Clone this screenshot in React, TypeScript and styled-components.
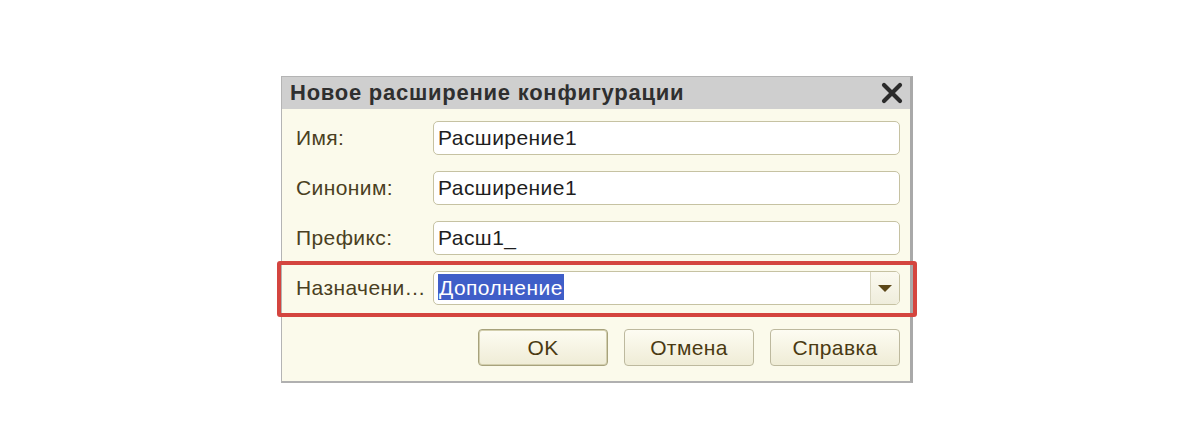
import React from "react";
import styled, { createGlobalStyle } from "styled-components";

/* ---------- Global ---------- */

const GlobalStyle = createGlobalStyle`
  body {
    margin: 0;
    background: #ffffff;
    font-family: "Liberation Sans", Arial, sans-serif;
  }
`;

/* ---------- Layout ---------- */

const Page = styled.div`
  width: 1200px;
  height: 440px;
  display: flex;
  justify-content: flex-start;
  align-items: flex-start;
  padding: 76px 0 0 281px;
  box-sizing: border-box;
`;

// Dialog window
const Dialog = styled.div`
  width: 632px;
  box-sizing: border-box;
  border: 1px solid #b4b4b4;
  border-right: 3px solid #a9a9a9;
  border-bottom: 2px solid #b0b0b0;
  background: #fbfaeb;
  display: flex;
  flex-direction: column;
`;

const TitleBar = styled.div`
  height: 32px;
  background: #cfcfcf;
  display: flex;
  align-items: center;
  justify-content: space-between;
  padding: 0 5px 0 8px;
`;

const Title = styled.div`
  font-size: 22px;
  font-weight: bold;
  color: #2f2f2f;
  letter-spacing: 0.75px;
`;

const CloseButton = styled.button`
  width: 26px;
  height: 26px;
  padding: 0;
  border: none;
  background: transparent;
  display: flex;
  align-items: center;
  justify-content: center;
`;

const Body = styled.div`
  padding: 12px 10px 15px 13px;
  display: flex;
  flex-direction: column;
  gap: 16px;
`;

const Row = styled.div<{ highlighted?: boolean }>`
  position: relative;
  display: grid;
  grid-template-columns: 138px 1fr;
  align-items: center;

  /* red annotation frame around the row */
  ${({ highlighted }) =>
    highlighted &&
    `
    &::after {
      content: "";
      position: absolute;
      top: -10px;
      bottom: -12px;
      left: -18px;
      right: -17px;
      border: 4px solid #d4453f;
      border-radius: 3px;
      pointer-events: none;
    }
  `}
`;

const Label = styled.div`
  font-size: 21px;
  letter-spacing: 0.4px;
  color: #4a3f22;
  white-space: nowrap;
  overflow: hidden;
  padding-left: 1px;
`;

const Field = styled.div`
  height: 34px;
  box-sizing: border-box;
  border: 1px solid #c6c2a2;
  border-radius: 5px;
  background: #ffffff;
  display: flex;
  align-items: center;
  padding-left: 4px;
  font-size: 21px;
  letter-spacing: 0.45px;
  color: #1e1e1e;
  overflow: hidden;
`;

const FieldText = styled.span`
  flex: 1;
`;

const Selected = styled.span`
  background: #3f5ec8;
  color: #ffffff;
  padding: 2px 1px 1px 1px;
`;

const DropButton = styled.div`
  width: 28px;
  height: 100%;
  border-left: 1px solid #d8d5bf;
  background: linear-gradient(#fbfaf0, #efeddc);
  display: flex;
  align-items: center;
  justify-content: center;
`;

const Triangle = styled.div`
  width: 0;
  height: 0;
  border-left: 7px solid transparent;
  border-right: 7px solid transparent;
  border-top: 7px solid #5b4718;
`;

const Buttons = styled.div`
  display: flex;
  justify-content: flex-end;
  gap: 16px;
  margin-top: 8px;
`;

const Button = styled.button<{ primary?: boolean }>`
  width: 130px;
  height: 37px;
  box-sizing: border-box;
  border: 1px solid ${({ primary }) => (primary ? "#a7a27c" : "#bdb99e")};
  box-shadow: ${({ primary }) =>
    primary ? "inset 0 0 0 1px #d3cfae" : "none"};
  border-radius: 4px;
  background: linear-gradient(#fdfcf2, #efecd6);
  font-family: "Liberation Sans", Arial, sans-serif;
  font-size: 21px;
  letter-spacing: 0.4px;
  color: #4a3a12;
  padding: 0;
`;

/* ---------- Component ---------- */

const fields = [
  { label: "Имя:", value: "Расширение1" },
  { label: "Синоним:", value: "Расширение1" },
  { label: "Префикс:", value: "Расш1_" },
];

export default function App() {
  return (
    <>
      <GlobalStyle />
      <Page>
        <Dialog>
          <TitleBar>
            <Title>Новое расширение конфигурации</Title>
            <CloseButton aria-label="Закрыть">
              <svg width="22" height="22" viewBox="0 0 22 22">
                <path
                  d="M3 3 L19 19 M19 3 L3 19"
                  stroke="#2b2b2b"
                  strokeWidth="4.2"
                  strokeLinecap="round"
                />
              </svg>
            </CloseButton>
          </TitleBar>
          <Body>
            {fields.map((f) => (
              <Row key={f.label}>
                <Label>{f.label}</Label>
                <Field>
                  <FieldText>{f.value}</FieldText>
                </Field>
              </Row>
            ))}
            <Row highlighted>
              <Label>Назначени…</Label>
              <Field>
                <FieldText>
                  <Selected>Дополнение</Selected>
                </FieldText>
                <DropButton>
                  <Triangle />
                </DropButton>
              </Field>
            </Row>
            <Buttons>
              <Button primary>OK</Button>
              <Button>Отмена</Button>
              <Button>Справка</Button>
            </Buttons>
          </Body>
        </Dialog>
      </Page>
    </>
  );
}
